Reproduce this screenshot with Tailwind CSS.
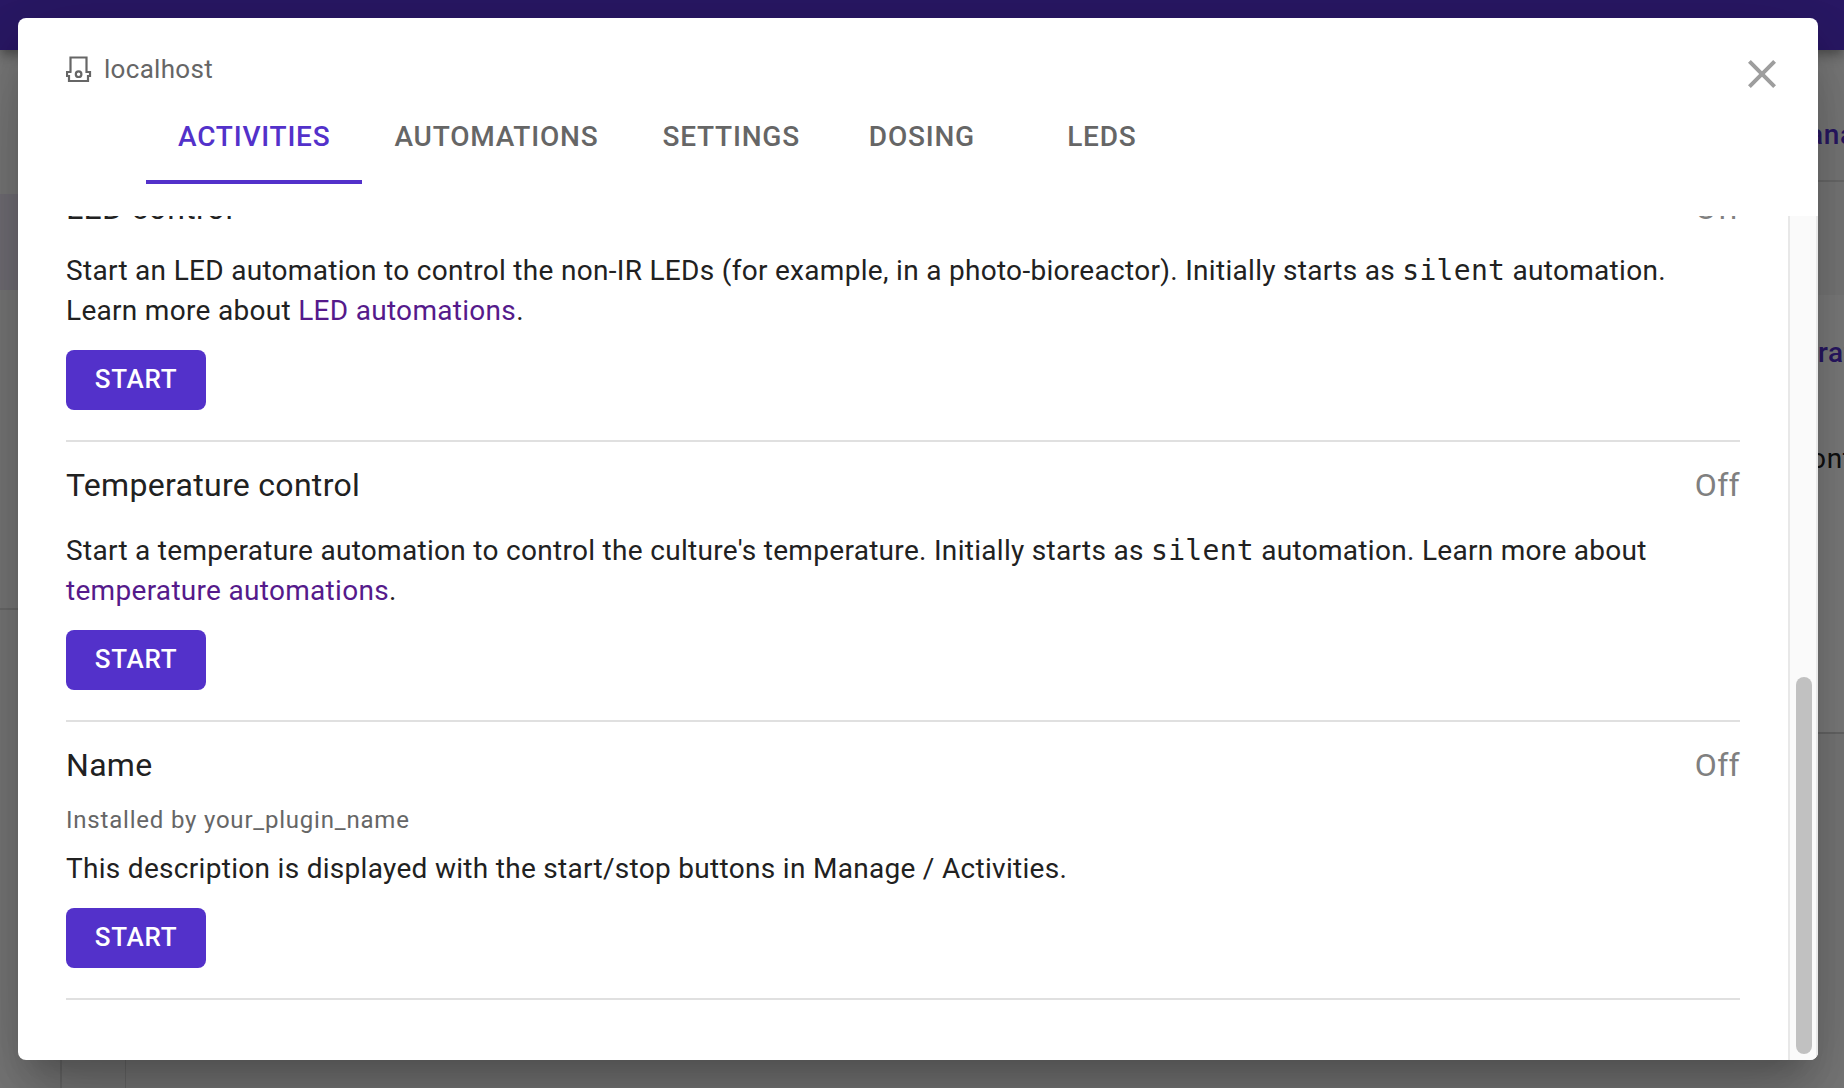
<!DOCTYPE html>
<html lang="en">
<head>
<meta charset="utf-8">
<title>Manage – localhost</title>
<script src="https://cdn.jsdelivr.net/npm/@tailwindcss/browser@4"></script>
</head>
<body class="relative h-screen overflow-hidden bg-[#f5f5f5] font-[Roboto,sans-serif] text-[28px] leading-10 tracking-[0.0107em] text-[#212121]">

  <!-- Page behind the dialog -->
  <div class="flex h-full flex-col" aria-hidden="true">
    <div class="relative h-[50px] shrink-0 bg-[#5331ca] shadow-[0_4px_8px_-2px_rgba(0,0,0,0.2),0_8px_10px_rgba(0,0,0,0.14),0_2px_20px_rgba(0,0,0,0.12)]"></div>
    <div class="flex min-h-0 flex-1">
      <div class="flex w-[62px] flex-col border-r-2 border-[#d8d8d8]">
        <div class="mt-36 h-24 bg-[#e6e0ee]"></div>
        <div class="mt-[318px] h-[2px] bg-[#d8d8d8]"></div>
      </div>
      <div class="w-16 border-r border-[#d8d8d8]"></div>
      <div class="flex-1"></div>
      <div class="flex w-[60px] flex-col overflow-hidden whitespace-nowrap font-medium tracking-wide text-[#5331ca]">
        <div class="mt-[65px] h-10 pl-6">anage</div>
        <div class="mt-[25px] h-[2px] bg-[#d8d8d8]"></div>
        <div class="mt-[113px] bg-[#fdfdfd] pt-[38px] pb-[46px]">
          <div class="h-10 pl-[34px]">rations</div>
          <div class="mt-[66px] h-10 pl-[26px] font-normal text-[#212121]">ontrol</div>
          <div class="h-[207px]"></div>
        </div>
        <div class="h-[2px] bg-[#d0d0d0]"></div>
      </div>
    </div>
  </div>

  <!-- Backdrop and dialog -->
  <div class="absolute inset-0 flex bg-black/50 pt-[18px] pr-[26px] pb-7 pl-[18px]">
    <div role="dialog" aria-labelledby="unit" class="flex min-w-0 flex-1 flex-col overflow-hidden rounded-lg bg-white shadow-[0_22px_30px_-14px_rgba(0,0,0,0.2),0_48px_76px_6px_rgba(0,0,0,0.14),0_18px_92px_16px_rgba(0,0,0,0.12)]">
      <header class="flex items-start justify-between pt-8 pr-8 pl-12">
        <h1 id="unit" class="flex items-center gap-3 text-[26px] leading-[38px] text-[#666666]">
          <svg class="size-[26px]" viewBox="0 0 26 26" fill="none" stroke="currentColor" stroke-width="2.200" aria-hidden="true">
            <path d="M4.500 16V1.500H20.500V16H24V20H22V25H3V20H1V16H5.500"/>
            <circle cx="12.600" cy="18.200" r="2.800"/>
          </svg>
          localhost
        </h1>
        <button type="button" aria-label="Close" class="text-[#9e9e9e]">
          <svg class="size-12" viewBox="0 0 24 24" fill="currentColor" aria-hidden="true">
            <path d="M19 6.410 17.590 5 12 10.590 6.410 5 5 6.410 10.590 12 5 17.590 6.410 19 12 13.410 17.590 19 19 17.590 13.410 12z"/>
          </svg>
        </button>
      </header>

      <div role="tablist" class="mb-8 flex pl-32 font-medium tracking-[0.028em] text-[#666666]">
        <button type="button" role="tab" aria-selected="true" class="h-[86px] min-w-[180px] border-b-4 border-[#5331ca] px-8 pb-1 text-[#5331ca]">ACTIVITIES</button>
        <button type="button" role="tab" class="h-[86px] min-w-[180px] px-8 pb-2">AUTOMATIONS</button>
        <button type="button" role="tab" class="h-[86px] min-w-[180px] px-8 pb-2">SETTINGS</button>
        <button type="button" role="tab" class="h-[86px] min-w-[180px] px-8 pb-2">DOSING</button>
        <button type="button" role="tab" class="h-[86px] min-w-[180px] px-8 pb-2">LEDS</button>
      </div>

      <div class="flex min-h-0 flex-1">
        <main class="flex min-w-0 flex-1 flex-col justify-end overflow-hidden pr-12 pb-[60px] pl-12">
          <section class="border-b-2 border-[#e0e0e0] pt-[19px] pb-[30px]">
            <div class="mb-[19px] flex justify-between text-[32px] leading-12">
              <h2>LED control</h2><span class="text-[#808080]">Off</span>
            </div>
            <p>Start an LED automation to control the non-IR LEDs (for example, in a photo-bioreactor). Initially starts as <code class="font-['DejaVu_Sans_Mono',monospace] text-[28px] leading-none">silent</code> automation. Learn more about <a href="#led" class="text-[#551a8b]">LED automations</a>.</p>
            <button type="button" class="mt-[19px] block h-[60px] w-[140px] rounded-lg bg-[#5331ca] pb-[2px] text-[26px] font-medium tracking-[0.028em] text-white">START</button>
          </section>
          <section class="border-b-2 border-[#e0e0e0] pt-[19px] pb-[30px]">
            <div class="mb-[22px] flex justify-between text-[32px] leading-12">
              <h2>Temperature control</h2><span class="text-[#808080]">Off</span>
            </div>
            <p>Start a temperature automation to control the culture's temperature. Initially starts as <code class="font-['DejaVu_Sans_Mono',monospace] text-[28px] leading-none">silent</code> automation. Learn more about <a href="#temperature" class="text-[#551a8b]">temperature automations</a>.</p>
            <button type="button" class="mt-[19px] block h-[60px] w-[140px] rounded-lg bg-[#5331ca] pb-[2px] text-[26px] font-medium tracking-[0.028em] text-white">START</button>
          </section>
          <section class="border-b-2 border-[#e0e0e0] pt-[19px] pb-[30px]">
            <div class="mb-[11px] flex justify-between text-[32px] leading-12">
              <h2>Name</h2><span class="text-[#808080]">Off</span>
            </div>
            <p class="mb-[9px] text-2xl leading-10 tracking-[0.033em] text-[#666666]">Installed by your_plugin_name</p>
            <p>This description is displayed with the start/stop buttons in Manage / Activities.</p>
            <button type="button" class="mt-[19px] block h-[60px] w-[140px] rounded-lg bg-[#5331ca] pb-[2px] text-[26px] font-medium tracking-[0.028em] text-white">START</button>
          </section>
        </main>
        <div class="flex w-[30px] flex-col justify-end border-r-2 border-l-2 border-[#e8e8e8] bg-[#fafafa] pr-1 pb-[6px] pl-[6px]" aria-hidden="true">
          <div class="h-[45%] rounded-full bg-[#c1c1c1]"></div>
        </div>
      </div>
    </div>
  </div>
</body>
</html>
